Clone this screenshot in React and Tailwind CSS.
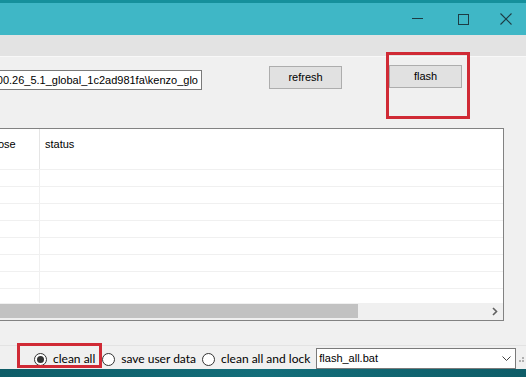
import React from "react";

const ms = { fontFamily: '"Liberation Sans", Arial, sans-serif' };
const seg = { fontFamily: 'Lato, "Noto Sans", sans-serif' };

function Radio({ checked }) {
  return (
    <span className="relative flex h-[13px] w-[13px] shrink-0 items-center justify-center rounded-full border border-[#333] bg-white">
      {checked && <span className="h-[7px] w-[7px] rounded-full bg-[#333]" />}
    </span>
  );
}

export default function App() {
  const rows = Array.from({ length: 8 });
  return (
    <div className="flex h-[377px] w-[526px] flex-col overflow-hidden bg-[#f0f0f0]">
      {/* top dark strip */}
      <div className="h-[3px] bg-[#15909c]" />
      {/* title bar */}
      <div className="flex h-[32px] items-center justify-end bg-[#3fb7c6]">
        <div className="flex h-full w-[47px] items-center justify-center">
          <svg width="12" height="2" viewBox="0 0 12 2"><rect x="0" y="0" width="11" height="1" fill="#1d3c44" /></svg>
        </div>
        <div className="flex h-full w-[45px] items-center justify-center">
          <svg width="11" height="11" viewBox="0 0 11 11"><rect x="0.5" y="0.5" width="10" height="10" fill="none" stroke="#1d3c44" strokeWidth="1" /></svg>
        </div>
        <div className="flex h-full w-[40px] items-center justify-center">
          <svg width="12" height="12" viewBox="0 0 12 12"><path d="M0.5 0.5 L11.5 11.5 M11.5 0.5 L0.5 11.5" stroke="#1d3c44" strokeWidth="1.1" /></svg>
        </div>
      </div>
      {/* menu strip */}
      <div className="h-[22px] border-b border-[#f8f8f8] bg-[#e3e3e3]" />

      {/* body */}
      <div className="relative flex flex-1 flex-col">
        {/* top row */}
        <div className="mt-[9px] flex h-[25px] items-start">
          <div className="mt-[4px] flex h-[20px] w-[202px] items-center justify-end overflow-hidden border border-l-0 border-[#7a7a7a] bg-white pr-[3px]">
            <span className="shrink-0 whitespace-nowrap text-[11px] text-black" style={ms}>900.26_5.1_global_1c2ad981fa\kenzo_glo</span>
          </div>
          <div className="ml-[67px] flex h-[23px] w-[73px] shrink-0 items-center justify-center border border-[#adadad] bg-[#e1e1e1] text-[11px] text-black" style={ms}>
            refresh
          </div>
          <div className="relative ml-[47px] mt-[-1px] flex h-[23px] w-[73px] shrink-0 items-center justify-center border border-[#adadad] bg-[#e1e1e1] text-[11px] text-black" style={ms}>
            flash
            <div className="pointer-events-none absolute left-[-4px] top-[-14px] h-[67px] w-[84px] border-[3px] border-[#d02a35]" />
          </div>
        </div>

        {/* table */}
        <div className="mt-[37px] flex h-[193px] w-[504px] flex-col border border-l-0 border-[#828282] bg-white">
          <div className="flex h-[41px] border-b border-[#f0f0f0] text-[11px] text-black" style={ms}>
            <div className="relative w-[40px] border-r border-[#e5e5e5] pt-[7px]">
              <span className="ml-[-2px]">ose</span>
            </div>
            <div className="pl-[5px] pt-[7px]">status</div>
          </div>
          <div className="relative flex-1 overflow-hidden">
            {rows.map((_, i) => (
              <div key={i} className="flex h-[17px] border-b border-[#f0f0f0]">
                <div className="w-[40px] border-r border-[#f0f0f0]" />
              </div>
            ))}
          </div>
          <div className="flex h-[17px] items-center bg-[#f0f0f0]">
            <div className="mb-[2px] h-[14px] w-[358px] bg-[#c2c2c2]" />
            <div className="flex-1" />
            <div className="flex w-[17px] items-center justify-center">
              <svg width="6" height="9" viewBox="0 0 6 9"><path d="M1 1 L4.5 4.5 L1 8" fill="none" stroke="#606060" strokeWidth="1.6" /></svg>
            </div>
          </div>
        </div>

        <div className="flex-1" />

        {/* bottom row */}
        <div className="flex h-[24px] items-start whitespace-nowrap border-t border-[#e3e3e3]" style={seg}>
          <div className="relative ml-[34px] mt-[6px] flex h-[14px] shrink-0 items-center">
            <Radio checked />
            <span className="ml-[6px] text-[12px] text-black">clean all</span>
            <div className="pointer-events-none absolute left-[-17px] top-[-9px] h-[25px] w-[85px] border-[3px] border-[#d02a35]" />
          </div>
          <div className="ml-[7px] mt-[6px] flex h-[14px] shrink-0 items-center">
            <Radio />
            <span className="ml-[6px] text-[12px] text-black">save user data</span>
          </div>
          <div className="ml-[6px] mt-[6px] flex h-[14px] shrink-0 items-center">
            <Radio />
            <span className="ml-[6px] text-[12px] text-black">clean all and lock</span>
          </div>
          <div className="ml-[6px] mt-[2px] flex h-[21px] w-[200px] shrink-0 items-center justify-between border border-[#7a7a7a] bg-white pl-[2px] pr-[4px]">
            <span className="text-[11px] text-black" style={ms}>flash_all.bat</span>
            <svg width="9" height="6" viewBox="0 0 9 6"><path d="M0.5 0.5 L4.5 4.5 L8.5 0.5" fill="none" stroke="#404040" strokeWidth="1" /></svg>
          </div>
          <div className="ml-[2px] mt-[11px] flex shrink-0 flex-col gap-[1px]">
            <div className="ml-[4px] h-[2px] w-[2px] bg-[#b0b0b0]" />
            <div className="flex gap-[1px]">
              <div className="ml-[1px] h-[2px] w-[2px] bg-[#b0b0b0]" />
              <div className="h-[2px] w-[2px] bg-[#b0b0b0]" />
            </div>
          </div>
        </div>
      </div>

      {/* bottom dark strip */}
      <div className="h-[8px] bg-gradient-to-r from-[#0e5d68] via-[#136e7a] to-[#0e5d68]" />
    </div>
  );
}
